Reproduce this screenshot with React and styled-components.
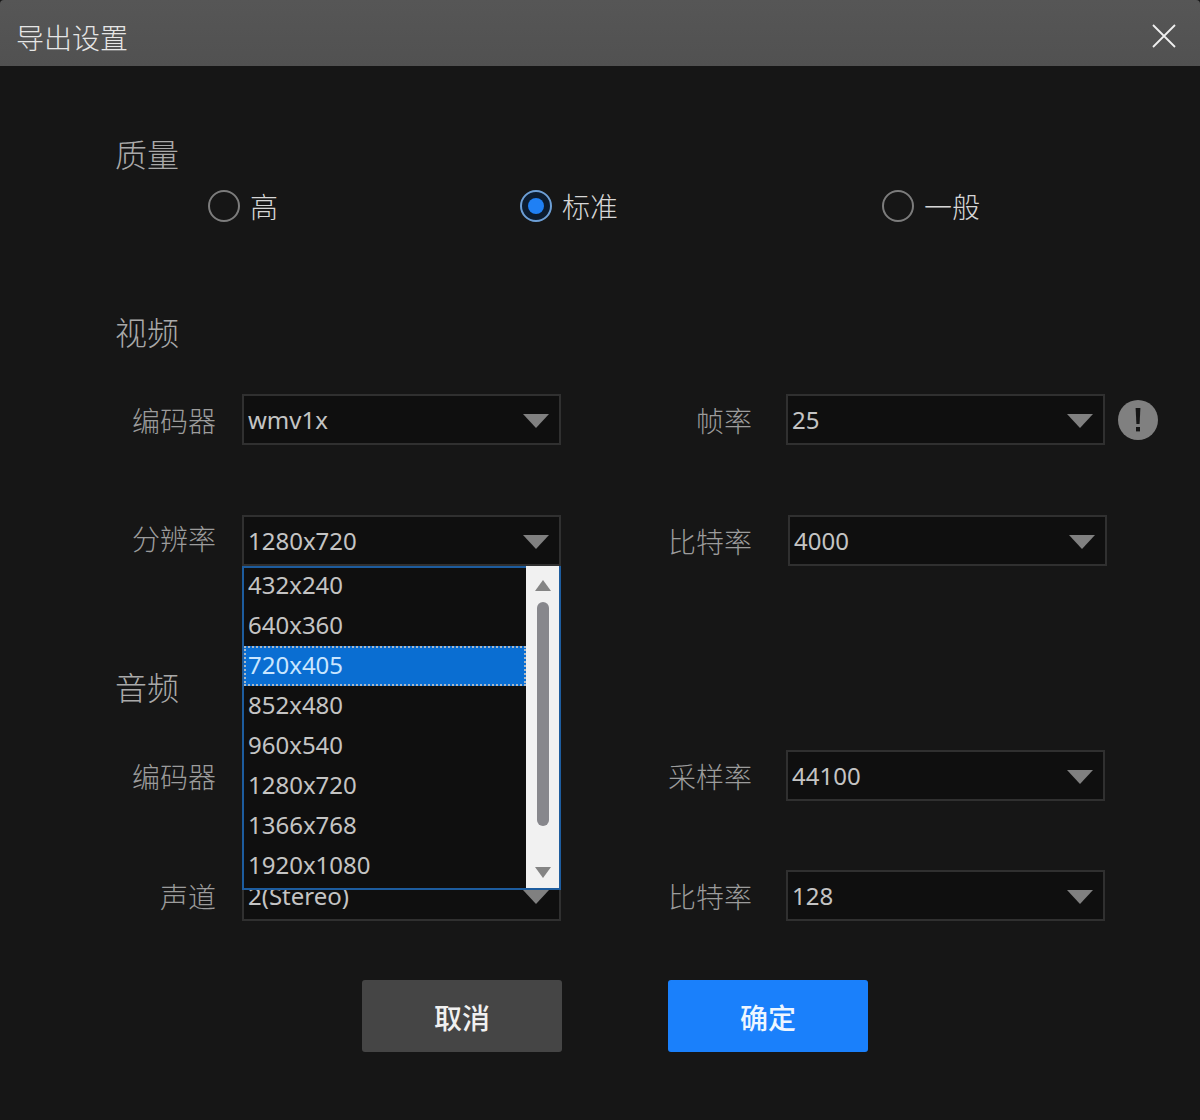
import styled, { createGlobalStyle } from "styled-components";

const GlobalStyle = createGlobalStyle`
  html, body {
    margin: 0;
    padding: 0;
    background: #161616;
  }
  * {
    box-sizing: border-box;
  }
`;

const cjk = `"Noto Sans CJK SC", "Noto Sans", sans-serif`;
const latin = `"Noto Sans", "Noto Sans CJK SC", sans-serif`;

const resolutions = [
  "432x240",
  "640x360",
  "720x405",
  "852x480",
  "960x540",
  "1280x720",
  "1366x768",
  "1920x1080",
];

const App = () => {
  return (
    <Dialog>
      <GlobalStyle />
      <TitleBar>
        <Title>导出设置</Title>
        <CloseIcon viewBox="0 0 24 24" aria-label="关闭">
          <path d="M1 1 L23 23 M23 1 L1 23" />
        </CloseIcon>
      </TitleBar>

      <Content>
        <Heading>质量</Heading>
        <RadioRow>
          <RadioItem $width={312}>
            <Radio />
            <RadioLabel>高</RadioLabel>
          </RadioItem>
          <RadioItem $width={362}>
            <Radio $checked />
            <RadioLabel>标准</RadioLabel>
          </RadioItem>
          <RadioItem>
            <Radio />
            <RadioLabel>一般</RadioLabel>
          </RadioItem>
        </RadioRow>

        <Heading $top={85}>视频</Heading>
        <FieldRow $top={43}>
          <FieldLabel>编码器</FieldLabel>
          <Select>
            <SelectValue>wmv1x</SelectValue>
            <Arrow />
          </Select>
          <SideLabel>帧率</SideLabel>
          <Select $gap={34}>
            <SelectValue>25</SelectValue>
            <Arrow />
          </Select>
          <WarnIcon viewBox="0 0 40 40" aria-label="提示">
            <circle cx="20" cy="20" r="20" fill="#808080" />
            <path d="M17.6 8 H22.4 L21.6 24 H18.4 Z" fill="#161616" />
            <rect x="18" y="27" width="4" height="4.4" fill="#161616" />
          </WarnIcon>
        </FieldRow>

        <FieldRow $top={70}>
          <FieldLabel $raised>分辨率</FieldLabel>
          <Select>
            <SelectValue>1280x720</SelectValue>
            <Arrow />
            <DropList>
              <Options>
                {resolutions.map((item) => (
                  <Option key={item} $active={item === "720x405"}>
                    {item}
                  </Option>
                ))}
              </Options>
              <ScrollBar>
                <ScrollUp />
                <ScrollThumb />
                <ScrollDown />
              </ScrollBar>
            </DropList>
          </Select>
          <SideLabel>比特率</SideLabel>
          <Select $gap={36}>
            <SelectValue>4000</SelectValue>
            <Arrow />
          </Select>
        </FieldRow>

        <Heading $top={100}>音频</Heading>
        <FieldRow $top={44}>
          <FieldLabel>编码器</FieldLabel>
          <Select>
            <Arrow />
          </Select>
          <SideLabel>采样率</SideLabel>
          <Select $gap={34}>
            <SelectValue>44100</SelectValue>
            <Arrow />
          </Select>
        </FieldRow>

        <FieldRow $top={69}>
          <FieldLabel>声道</FieldLabel>
          <Select>
            <SelectValue>2(Stereo)</SelectValue>
            <Arrow />
          </Select>
          <SideLabel>比特率</SideLabel>
          <Select $gap={34}>
            <SelectValue>128</SelectValue>
            <Arrow />
          </Select>
        </FieldRow>

        <Buttons>
          <Button>取消</Button>
          <Button $primary>确定</Button>
        </Buttons>
      </Content>
    </Dialog>
  );
};

export default App;

const Dialog = styled.div`
  width: 1200px;
  height: 1120px;
  background: #161616;
  overflow: hidden;
  font-family: ${cjk};
`;

const TitleBar = styled.div`
  height: 66px;
  padding: 0 24px 0 16px;
  display: flex;
  align-items: center;
  justify-content: space-between;
  background: linear-gradient(#565656, #515151);
  border-top-left-radius: 4px;
  border-top-right-radius: 4px;
`;

const Title = styled.div`
  font-size: 28px;
  font-weight: 300;
  color: #e6e6e6;
  line-height: 40px;
  margin-top: 8px;
`;

const CloseIcon = styled.svg`
  width: 24px;
  height: 24px;
  margin-top: 6px;
  path {
    stroke: #f0f0f0;
    stroke-width: 1.8;
    fill: none;
  }
`;

const Content = styled.div`
  padding: 67px 0 0 115px;
`;

const Heading = styled.div`
  font-size: 32px;
  font-weight: 300;
  line-height: 40px;
  color: #a9a9a9;
  margin-top: ${({ $top }) => $top || 0}px;
`;

const RadioRow = styled.div`
  display: flex;
  margin-top: 13px;
  padding-left: 93px;
`;

const RadioItem = styled.div`
  display: flex;
  align-items: center;
  gap: 10px;
  height: 40px;
  width: ${({ $width }) => ($width ? `${$width}px` : "auto")};
`;

const Radio = styled.span`
  width: 32px;
  height: 32px;
  border-radius: 50%;
  display: flex;
  align-items: center;
  justify-content: center;
  border: 2px solid ${({ $checked }) => ($checked ? "#6d9fd6" : "#7c7c7c")};
  background: ${({ $checked }) => ($checked ? "#0c1c30" : "transparent")};
  &::after {
    content: "";
    width: 16px;
    height: 16px;
    border-radius: 50%;
    background: #1f80f5;
    display: ${({ $checked }) => ($checked ? "block" : "none")};
  }
`;

const RadioLabel = styled.span`
  font-size: 28px;
  font-weight: 300;
  line-height: 40px;
  color: #d6d6d6;
`;

const FieldRow = styled.div`
  display: flex;
  align-items: center;
  height: 51px;
  margin-top: ${({ $top }) => $top}px;
`;

const FieldLabel = styled.div`
  width: 101px;
  margin-right: 26px;
  margin-bottom: ${({ $raised }) => ($raised ? "5px" : "0")};
  text-align: right;
  font-size: 28px;
  font-weight: 300;
  line-height: 40px;
  color: #9c9c9c;
`;

const SideLabel = styled.div`
  width: 84px;
  margin-left: 107px;
  text-align: right;
  font-size: 28px;
  font-weight: 300;
  line-height: 40px;
  color: #9c9c9c;
`;

const Select = styled.div`
  position: relative;
  width: 319px;
  height: 51px;
  margin-left: ${({ $gap }) => $gap || 0}px;
  padding: 0 10px 0 4px;
  display: flex;
  align-items: center;
  justify-content: space-between;
  background: #0f0f0f;
  border: 2px solid #303030;
`;

const SelectValue = styled.span`
  font-family: ${latin};
  font-size: 24px;
  color: #c4c4c4;
`;

const Arrow = styled.span`
  width: 0;
  height: 0;
  margin-left: auto;
  margin-top: 2px;
  border-left: 13px solid transparent;
  border-right: 13px solid transparent;
  border-top: 14px solid #808080;
`;

const DropList = styled.div`
  position: absolute;
  z-index: 10;
  left: -2px;
  top: 49px;
  width: 319px;
  height: 324px;
  display: flex;
  border: 2px solid #1d5c9e;
  background: #0f0f0f;
`;

const Options = styled.div`
  width: 282px;
  flex-shrink: 0;
  margin-top: -2px;
`;

const Option = styled.div`
  height: 40px;
  padding: 0 0 4px 4px;
  display: flex;
  align-items: center;
  font-family: ${latin};
  font-size: 24px;
  color: ${({ $active }) => ($active ? "#c9e6ff" : "#c4c4c4")};
  background: ${({ $active }) => ($active ? "#0a6ed2" : "transparent")};
  outline: ${({ $active }) => ($active ? "2px dotted #a9b8c6" : "none")};
  outline-offset: -2px;
`;

const ScrollBar = styled.div`
  flex: 1;
  margin-top: -2px;
  padding: 14px 0 10px;
  display: flex;
  flex-direction: column;
  align-items: center;
  background: #f1f1f1;
`;

const ScrollUp = styled.span`
  width: 0;
  height: 0;
  border-left: 8px solid transparent;
  border-right: 8px solid transparent;
  border-bottom: 11px solid #848484;
`;

const ScrollThumb = styled.span`
  width: 12px;
  height: 224px;
  margin-top: 11px;
  border-radius: 6px;
  background: #87878c;
`;

const ScrollDown = styled.span`
  width: 0;
  height: 0;
  margin-top: auto;
  border-left: 8px solid transparent;
  border-right: 8px solid transparent;
  border-top: 11px solid #848484;
`;

const WarnIcon = styled.svg`
  width: 40px;
  height: 40px;
  margin-left: 13px;
`;

const Buttons = styled.div`
  display: flex;
  gap: 106px;
  margin-top: 59px;
  padding-left: 247px;
`;

const Button = styled.button`
  width: 200px;
  height: 72px;
  padding: 2px 0 0;
  border: none;
  border-radius: 3px;
  font-family: ${cjk};
  font-size: 28px;
  font-weight: 500;
  color: ${({ $primary }) => ($primary ? "#eef6ff" : "#f0f0f0")};
  background: ${({ $primary }) => ($primary ? "#1a80fb" : "#454545")};
`;
